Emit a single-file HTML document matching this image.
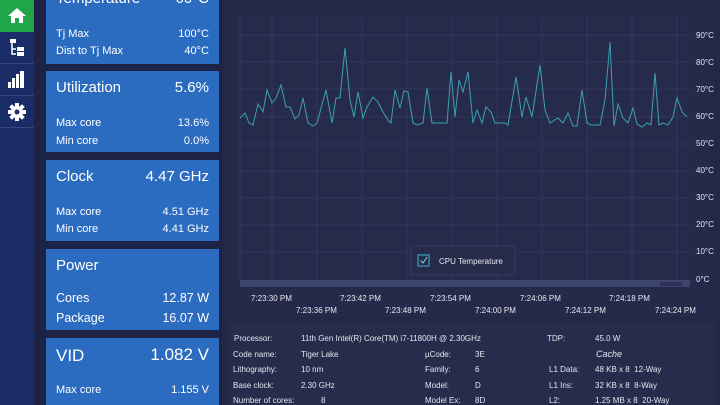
<!DOCTYPE html>
<html style="overflow:hidden;width:720px;height:405px"><head><style>
*{margin:0;padding:0;box-sizing:border-box}
body{width:720px;height:405px;overflow:hidden;background:#1d2346;font-family:"Liberation Sans",sans-serif;position:relative}
.sb{position:absolute;left:0;top:0;width:34px;height:405px;background:#1b2d66}
.sbi{position:absolute;left:0;width:34px;height:32px;border-bottom:1px solid #34477e}
.card{position:absolute;left:46px;width:173px;background:#2c6cc0;color:#fff;overflow:hidden}
.t{position:absolute;left:10px;font-size:15px}
.tv{position:absolute;right:10px;font-size:15px}
.r{position:absolute;left:10px;font-size:11px}
.rv{position:absolute;right:10px;font-size:11px}
.panel{position:absolute;left:222px;top:0;width:498px;height:405px;background:#232847}
.info{position:absolute;left:228px;top:322px;width:488px;height:83px;background:#272c4c}
.i{position:absolute;font-size:8px;color:#e4e6ee;white-space:nowrap}
.tl{position:absolute;font-size:8px;color:#e8e8f0;white-space:nowrap}
</style></head><body>
<div class="sb">
 <div class="sbi" style="top:0;background:#1fa64a;border:none;height:32px">
  <svg width="34" height="32"><path d="M17 8 L8 16 H11 V23 H15 V18 H19 V23 H23 V16 H26 Z" fill="#fff"/></svg></div>
 <div class="sbi" style="top:32px">
  <svg width="34" height="32"><rect x="10" y="7" width="6" height="4" fill="#fff"/><path d="M12 11 V22 H16 M12 17 H16" stroke="#fff" stroke-width="1.5" fill="none"/><rect x="17" y="15" width="7" height="4" fill="#fff"/><rect x="17" y="20" width="7" height="4" fill="#fff"/></svg></div>
 <div class="sbi" style="top:64px">
  <svg width="34" height="32"><rect x="8" y="18" width="3" height="6" fill="#fff"/><rect x="12" y="14" width="3" height="10" fill="#fff"/><rect x="16" y="10" width="3" height="14" fill="#fff"/><rect x="20" y="7" width="4" height="17" fill="#fff"/></svg></div>
 <div class="sbi" style="top:96px">
  <svg width="34" height="32"><g transform="translate(17,16)" fill="#fff"><circle r="6"/><g><rect x="-2" y="-9" width="4" height="4"/><rect x="-2" y="5" width="4" height="4"/><rect x="-9" y="-2" width="4" height="4"/><rect x="5" y="-2" width="4" height="4"/></g><g transform="rotate(45)"><rect x="-2" y="-9" width="4" height="4"/><rect x="-2" y="5" width="4" height="4"/><rect x="-9" y="-2" width="4" height="4"/><rect x="5" y="-2" width="4" height="4"/></g><circle r="2.5" fill="#1b2d66"/></g></svg></div>
</div>

<div class="card" style="top:-10px;height:74px">
 <div class="t" style="top:0">Temperature</div><div class="tv" style="top:0">60°C</div>
 <div class="r" style="top:38px">Tj Max</div><div class="rv" style="top:38px">100°C</div>
 <div class="r" style="top:55px">Dist to Tj Max</div><div class="rv" style="top:55px">40°C</div>
</div>
<div class="card" style="top:71px;height:81px">
 <div class="t" style="top:8px">Utilization</div><div class="tv" style="top:8px">5.6%</div>
 <div class="r" style="top:46px">Max core</div><div class="rv" style="top:46px">13.6%</div>
 <div class="r" style="top:64px">Min core</div><div class="rv" style="top:64px">0.0%</div>
</div>
<div class="card" style="top:160px;height:81px">
 <div class="t" style="top:8px">Clock</div><div class="tv" style="top:8px">4.47 GHz</div>
 <div class="r" style="top:46px">Max core</div><div class="rv" style="top:46px">4.51 GHz</div>
 <div class="r" style="top:63px">Min core</div><div class="rv" style="top:63px">4.41 GHz</div>
</div>
<div class="card" style="top:249px;height:81px">
 <div class="t" style="top:8px">Power</div>
 <div class="r" style="top:42px;font-size:12.5px">Cores</div><div class="rv" style="top:42px;font-size:12.5px">12.87 W</div>
 <div class="r" style="top:62px;font-size:12.5px">Package</div><div class="rv" style="top:62px;font-size:12.5px">16.07 W</div>
</div>
<div class="card" style="top:338px;height:67px">
 <div class="t" style="top:8px;font-size:17px">VID</div><div class="tv" style="top:7px;font-size:17px">1.082 V</div>
 <div class="r" style="top:46px">Max core</div><div class="rv" style="top:46px">1.155 V</div>
</div>

<div class="panel"></div>
<svg style="position:absolute;left:0;top:0" width="720" height="405">
 <rect x="232" y="12" width="478" height="305" fill="#252a4a"/>
 <rect x="240" y="17" width="450" height="262" fill="#262b4c"/>
 <g stroke="#31375c" stroke-width="1">
  <line x1="240" y1="35" x2="690" y2="35"/><line x1="240" y1="62" x2="690" y2="62"/><line x1="240" y1="89" x2="690" y2="89"/><line x1="240" y1="117" x2="690" y2="117"/><line x1="240" y1="144" x2="690" y2="144"/><line x1="240" y1="171" x2="690" y2="171"/><line x1="240" y1="198" x2="690" y2="198"/><line x1="240" y1="225" x2="690" y2="225"/><line x1="240" y1="252" x2="690" y2="252"/>
  <line x1="240" y1="17" x2="240" y2="280"/><line x1="272" y1="17" x2="272" y2="280"/><line x1="317" y1="17" x2="317" y2="280"/><line x1="362" y1="17" x2="362" y2="280"/><line x1="407" y1="17" x2="407" y2="280"/><line x1="452" y1="17" x2="452" y2="280"/><line x1="497" y1="17" x2="497" y2="280"/><line x1="542" y1="17" x2="542" y2="280"/><line x1="587" y1="17" x2="587" y2="280"/><line x1="632" y1="17" x2="632" y2="280"/><line x1="677" y1="17" x2="677" y2="280"/>
 </g>
 <rect x="240" y="280" width="450" height="7" fill="#3e4470"/>
 <rect x="660" y="282" width="22" height="4" fill="#2c3156"/>
 <polyline fill="none" stroke="#3aa0b4" stroke-width="1" points="240,118 245,113 249,123 253,125 258,104 263,112 267,90 272,103 276,98 281,85 286,107 290,107 295,119 299,115 303,98 308,123 313,126 317,123 326,90 332,123 336,98 340,98 345,48 350,100 354,117 358,92 363,118 367,107 373,97 378,102 383,112 388,120 391,123 395,90 400,108 404,91 408,92 413,123 417,125 423,123 427,88 432,123 447,123 451,72 455,117 459,80 463,92 468,72 473,123 477,110 482,123 486,107 491,112 495,123 505,123 508,125 516,77 522,117 526,97 532,117 540,65 545,110 550,123 558,118 563,123 568,113 573,126 577,126 582,90 587,123 591,125 600,125 605,100 610,42 614,126 618,104 623,118 628,123 633,108 637,124 642,127 647,123 651,125 655,73 659,125 663,123 668,125 673,117 677,98 682,112 687,117"/>
 <rect x="411" y="246" width="104" height="29" fill="#262b4c" stroke="#343a60"/>
 <rect x="418" y="255" width="11" height="11" fill="none" stroke="#3aa0b4" stroke-width="1.2"/>
 <path d="M420.5 260.5 L423 263 L427 257" stroke="#8fd0e0" fill="none" stroke-width="1"/>
 <text x="439" y="264" font-family="Liberation Sans" font-size="8" fill="#e8e8f0">CPU Temperature</text>
 <g font-family="Liberation Sans" font-size="8" fill="#e4e6ee">
  <text x="696" y="38">90°C</text><text x="696" y="65">80°C</text><text x="696" y="92">70°C</text><text x="696" y="119">60°C</text><text x="696" y="146">50°C</text><text x="696" y="173">40°C</text><text x="696" y="200">30°C</text><text x="696" y="227">20°C</text><text x="696" y="254">10°C</text><text x="696" y="282">0°C</text>
 </g>
</svg>
<div class="tl" style="left:251px;top:294px">7:23:30 PM</div>
<div class="tl" style="left:340px;top:294px">7:23:42 PM</div>
<div class="tl" style="left:430px;top:294px">7:23:54 PM</div>
<div class="tl" style="left:520px;top:294px">7:24:06 PM</div>
<div class="tl" style="left:609px;top:294px">7:24:18 PM</div>
<div class="tl" style="left:296px;top:306px">7:23:36 PM</div>
<div class="tl" style="left:385px;top:306px">7:23:48 PM</div>
<div class="tl" style="left:475px;top:306px">7:24:00 PM</div>
<div class="tl" style="left:565px;top:306px">7:24:12 PM</div>
<div class="tl" style="left:655px;top:306px">7:24:24 PM</div>
<div class="info"></div>
<div class="i" style="left:234px;top:334px">Processor:</div><div class="i" style="left:301px;top:334px">11th Gen Intel(R) Core(TM) i7-11800H @ 2.30GHz</div>
<div class="i" style="left:547px;top:334px">TDP:</div><div class="i" style="left:595px;top:334px">45.0 W</div>
<div class="i" style="left:233px;top:350px">Code name:</div><div class="i" style="left:301px;top:350px">Tiger Lake</div>
<div class="i" style="left:425px;top:350px">µCode:</div><div class="i" style="left:475px;top:350px">3E</div>
<div class="i" style="left:596px;top:349px;font-style:italic;font-size:9px">Cache</div>
<div class="i" style="left:233px;top:365px">Lithography:</div><div class="i" style="left:301px;top:365px">10 nm</div>
<div class="i" style="left:425px;top:365px">Family:</div><div class="i" style="left:475px;top:365px">6</div>
<div class="i" style="left:549px;top:365px">L1 Data:</div><div class="i" style="left:595px;top:365px">48 KB x 8 &nbsp;12-Way</div>
<div class="i" style="left:233px;top:381px">Base clock:</div><div class="i" style="left:301px;top:381px">2.30 GHz</div>
<div class="i" style="left:425px;top:381px">Model:</div><div class="i" style="left:475px;top:381px">D</div>
<div class="i" style="left:549px;top:381px">L1 Ins:</div><div class="i" style="left:595px;top:381px">32 KB x 8 &nbsp;8-Way</div>
<div class="i" style="left:233px;top:396px">Number of cores:</div><div class="i" style="left:321px;top:396px">8</div>
<div class="i" style="left:425px;top:396px">Model Ex:</div><div class="i" style="left:475px;top:396px">8D</div>
<div class="i" style="left:549px;top:396px">L2:</div><div class="i" style="left:595px;top:396px">1.25 MB x 8 &nbsp;20-Way</div>
</body></html>
